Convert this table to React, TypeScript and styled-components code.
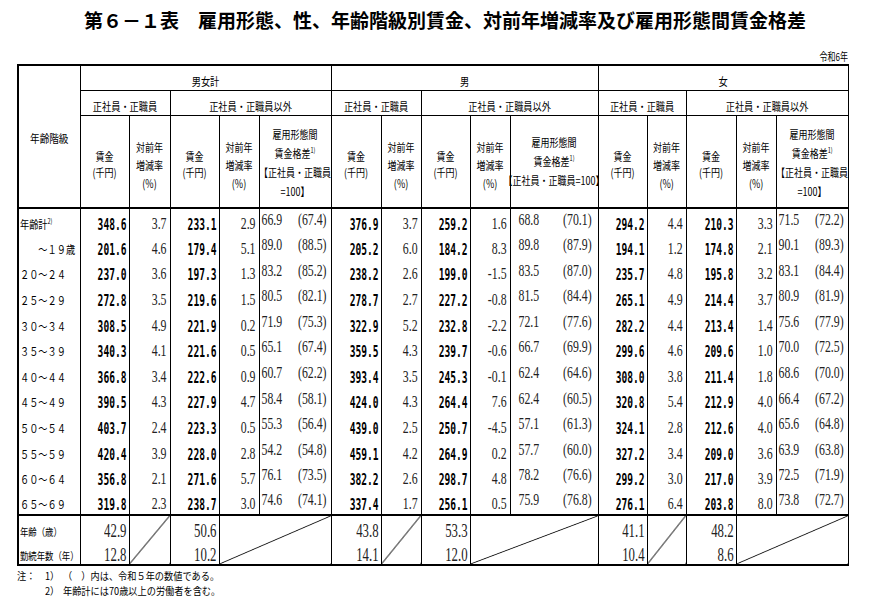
import React from "react";
import styled, { createGlobalStyle } from "styled-components";

const GlobalStyle = createGlobalStyle`
  html, body {
    margin: 0;
    padding: 0;
    background: #fff;
  }
  body {
    font-family: "Noto Sans CJK JP", "Noto Sans", sans-serif;
    color: #111;
  }
`;

const Page = styled.div`
  width: 870px;
  height: 604px;
  overflow: hidden;
`;

const Title = styled.h1`
  margin: 0;
  height: 40px;
  line-height: 40px;
  padding-left: 20px;
  text-align: center;
  font-family: "Noto Sans CJK JP", sans-serif;
  font-size: 19px;
  font-weight: 700;
  color: #000;
  white-space: nowrap;
`;

const Era = styled.div`
  width: 831px;
  margin-left: 17px;
  height: 24px;
  box-sizing: border-box;
  padding-bottom: 3px;
  display: flex;
  justify-content: flex-end;
  align-items: flex-end;
`;

// CJK text, drawn narrow and tall like the printed original
const Jp = styled.span<{ $size?: number; $sy?: number }>`
  display: inline-block;
  font-family: "Noto Sans CJK JP", sans-serif;
  font-size: ${(p) => p.$size ?? 9}px;
  line-height: 1;
  transform: scaleY(${(p) => p.$sy ?? 1.3});
  white-space: nowrap;
  color: #000;
`;

const Sup = styled.sup`
  font-size: 5.5px;
  line-height: 0;
  vertical-align: 4px;
`;

const Wage = styled.span`
  display: inline-block;
  font-family: "DejaVu Sans Mono", monospace;
  font-weight: 700;
  font-size: 9.6px;
  line-height: 1;
  transform: scaleY(1.7);
  color: #000;
  white-space: nowrap;
`;

const Rate = styled.span<{ $size?: number }>`
  display: inline-block;
  font-family: "Liberation Serif", serif;
  font-size: ${(p) => p.$size ?? 11.8}px;
  line-height: 1;
  transform: scaleY(1.48);
  color: #222;
  white-space: nowrap;
`;

const Table = styled.table`
  margin-left: 17px;
  width: 831px;
  border-collapse: collapse;
  table-layout: fixed;
  border-top: 2px solid #000;
  border-bottom: 2px solid #000;
  border-left: 2px solid #000;
  border-right: 1px solid #000;

  thead {
    border-bottom: 2px solid #000;
  }
  tfoot {
    border-top: 2px solid #000;
  }
`;

const HeadRow = styled.tr<{ $h: number }>`
  height: ${(p) => p.$h}px;
`;

const Th = styled.th`
  border: 1px solid #000;
  padding: 0;
  font-weight: normal;
  text-align: center;
  vertical-align: middle;
`;

const Stack = styled.div<{ $shift?: number }>`
  display: flex;
  flex-direction: column;
  align-items: center;
  margin-top: ${(p) => p.$shift ?? 0}px;
`;

const Line = styled.div<{ $h: number }>`
  height: ${(p) => p.$h}px;
  line-height: ${(p) => p.$h}px;
  white-space: nowrap;
`;

const DataRow = styled.tr`
  height: 25.6px;
`;

const FootRow = styled.tr`
  height: 24.5px;
`;

const LabelCell = styled.td`
  border-left: 1px solid #000;
  border-right: 1px solid #000;
  padding: 0 0 0 1px;
  text-align: left;
  vertical-align: middle;
  white-space: nowrap;
`;

const NumCell = styled.td<{ $pad: number }>`
  border-left: 1px solid #000;
  border-right: 1px solid #000;
  padding: 0 ${(p) => p.$pad}px 0 0;
  text-align: right;
  vertical-align: middle;
  white-space: nowrap;
`;

const GapBox = styled.div<{ $wide?: boolean }>`
  display: flex;
  justify-content: space-between;
  padding: ${(p) => (p.$wide ? "0 6px 0 8px" : "0 4px 0 2px")};
`;

const Diag = styled.td`
  border: 1px solid #000;
  padding: 0;
  background: linear-gradient(
    to bottom right,
    transparent calc(50% - 0.8px),
    #000 50%,
    transparent calc(50% + 0.8px)
  );
`;

const Notes = styled.div`
  margin-left: 17px;
  padding-top: 6px;
`;

const NoteRow = styled.div`
  display: grid;
  grid-template-columns: 28px 18px auto;
  height: 15px;
  line-height: 15px;
`;

const COLS = [62, 49, 41, 49, 40, 72, 50, 40, 49, 40, 88, 49, 39, 50, 40, 72];
const GROUPS = ["男女計", "男", "女"];

const ROWS: [React.ReactNode, string][] = [
  [<>年齢計<Sup>2)</Sup></>, "348.6 3.7 233.1 2.9 66.9 (67.4)|376.9 3.7 259.2 1.6 68.8 (70.1)|294.2 4.4 210.3 3.3 71.5 (72.2)"],
  ["　　～１９歳", "201.6 4.6 179.4 5.1 89.0 (88.5)|205.2 6.0 184.2 8.3 89.8 (87.9)|194.1 1.2 174.8 2.1 90.1 (89.3)"],
  ["２０～２４", "237.0 3.6 197.3 1.3 83.2 (85.2)|238.2 2.6 199.0 -1.5 83.5 (87.0)|235.7 4.8 195.8 3.2 83.1 (84.4)"],
  ["２５～２９", "272.8 3.5 219.6 1.5 80.5 (82.1)|278.7 2.7 227.2 -0.8 81.5 (84.4)|265.1 4.9 214.4 3.7 80.9 (81.9)"],
  ["３０～３４", "308.5 4.9 221.9 0.2 71.9 (75.3)|322.9 5.2 232.8 -2.2 72.1 (77.6)|282.2 4.4 213.4 1.4 75.6 (77.9)"],
  ["３５～３９", "340.3 4.1 221.6 0.5 65.1 (67.4)|359.5 4.3 239.7 -0.6 66.7 (69.9)|299.6 4.6 209.6 1.0 70.0 (72.5)"],
  ["４０～４４", "366.8 3.4 222.6 0.9 60.7 (62.2)|393.4 3.5 245.3 -0.1 62.4 (64.6)|308.0 3.8 211.4 1.8 68.6 (70.0)"],
  ["４５～４９", "390.5 4.3 227.9 4.7 58.4 (58.1)|424.0 4.3 264.4 7.6 62.4 (60.5)|320.8 5.4 212.9 4.0 66.4 (67.2)"],
  ["５０～５４", "403.7 2.4 223.3 0.5 55.3 (56.4)|439.0 2.5 250.7 -4.5 57.1 (61.3)|324.1 2.8 212.6 4.0 65.6 (64.8)"],
  ["５５～５９", "420.4 3.9 228.0 2.8 54.2 (54.8)|459.1 4.2 264.9 0.2 57.7 (60.0)|327.2 3.4 209.0 3.6 63.9 (63.8)"],
  ["６０～６４", "356.8 2.1 271.6 5.7 76.1 (73.5)|382.2 2.6 298.7 4.8 78.2 (76.6)|299.2 3.0 217.0 3.9 72.5 (71.9)"],
  ["６５～６９", "319.8 2.3 238.7 3.0 74.6 (74.1)|337.4 1.7 256.1 0.5 75.9 (76.8)|276.1 6.4 203.8 8.0 73.8 (72.7)"],
];

const FOOT = {
  age: [["42.9", "50.6"], ["43.8", "53.3"], ["41.1", "48.2"]],
  tenure: [["12.8", "10.2"], ["14.1", "12.0"], ["10.4", "8.6"]],
};

const HeadLines = ({ lines, h, shift }: { lines: React.ReactNode[]; h: number; shift?: number }) => (
  <Stack $shift={shift}>
    {lines.map((l, i) => (
      <Line key={i} $h={h}>
        <Jp $size={9} $sy={1.25}>{l}</Jp>
      </Line>
    ))}
  </Stack>
);

const App = () => {
  return (
    <Page>
      <GlobalStyle />
      <Title>第６－１表　雇用形態、性、年齢階級別賃金、対前年増減率及び雇用形態間賃金格差</Title>
      <Era>
        <Jp $size={8} $sy={1.35}>令和6年</Jp>
      </Era>
      <Table>
        <colgroup>
          {COLS.map((w, i) => (
            <col key={i} style={{ width: w }} />
          ))}
        </colgroup>
        <thead>
          <HeadRow $h={24}>
            <Th rowSpan={3}>
              <Jp $size={9.6} $sy={1.15}>年齢階級</Jp>
            </Th>
            {GROUPS.map((g) => (
              <Th key={g} colSpan={5}>
                <Jp $size={9.2} $sy={1.25}>{g}</Jp>
              </Th>
            ))}
          </HeadRow>
          <HeadRow $h={25}>
            {GROUPS.map((g) => (
              <React.Fragment key={g}>
                <Th colSpan={2}>
                  <Jp $size={9.2} $sy={1.2}>正社員・正職員</Jp>
                </Th>
                <Th colSpan={3}>
                  <Jp $size={9.2} $sy={1.2}>正社員・正職員以外</Jp>
                </Th>
              </React.Fragment>
            ))}
          </HeadRow>
          <HeadRow $h={92}>
            {GROUPS.map((g, gi) => (
              <React.Fragment key={g}>
                <Th>
                  <HeadLines lines={["賃金", "(千円)"]} h={16} />
                </Th>
                <Th>
                  <HeadLines lines={["対前年", "増減率", "(%)"]} h={18} shift={2} />
                </Th>
                <Th>
                  <HeadLines lines={["賃金", "(千円)"]} h={16} />
                </Th>
                <Th>
                  <HeadLines lines={["対前年", "増減率", "(%)"]} h={18} shift={2} />
                </Th>
                <Th>
                  {gi === 1 ? (
                    <HeadLines
                      lines={["雇用形態間", <>賃金格差<Sup>1)</Sup></>, "【正社員・正職員=100】"]}
                      h={19}
                      shift={-6}
                    />
                  ) : (
                    <HeadLines
                      lines={["雇用形態間", <>賃金格差<Sup>1)</Sup></>, "【正社員・正職員", "=100】"]}
                      h={19}
                      shift={-3}
                    />
                  )}
                </Th>
              </React.Fragment>
            ))}
          </HeadRow>
        </thead>
        <tbody>
          {ROWS.map(([label, data], ri) => (
            <DataRow key={ri}>
              <LabelCell>
                <Jp $size={9.2} $sy={1.25}>{label}</Jp>
              </LabelCell>
              {data.split("|").map((grp, gi) => {
                const v = grp.split(" ");
                return (
                  <React.Fragment key={gi}>
                    <NumCell $pad={2}><Wage>{v[0]}</Wage></NumCell>
                    <NumCell $pad={3}><Rate>{v[1]}</Rate></NumCell>
                    <NumCell $pad={2}><Wage>{v[2]}</Wage></NumCell>
                    <NumCell $pad={3}><Rate>{v[3]}</Rate></NumCell>
                    <NumCell $pad={0}>
                      <GapBox $wide={gi === 1}>
                        <Rate>{v[4]}</Rate>
                        <Rate>{v[5]}</Rate>
                      </GapBox>
                    </NumCell>
                  </React.Fragment>
                );
              })}
            </DataRow>
          ))}
        </tbody>
        <tfoot>
          <FootRow>
            <LabelCell>
              <Jp $size={8.4} $sy={1.25}>年齢（歳）</Jp>
            </LabelCell>
            {FOOT.age.map((f, gi) => (
              <React.Fragment key={gi}>
                <NumCell $pad={2}><Rate $size={12.8}>{f[0]}</Rate></NumCell>
                <Diag rowSpan={2} />
                <NumCell $pad={2}><Rate $size={12.8}>{f[1]}</Rate></NumCell>
                <Diag rowSpan={2} colSpan={2} />
              </React.Fragment>
            ))}
          </FootRow>
          <FootRow>
            <LabelCell>
              <Jp $size={8.4} $sy={1.25}>勤続年数（年）</Jp>
            </LabelCell>
            {FOOT.tenure.map((f, gi) => (
              <React.Fragment key={gi}>
                <NumCell $pad={2}><Rate $size={12.8}>{f[0]}</Rate></NumCell>
                <NumCell $pad={2}><Rate $size={12.8}>{f[1]}</Rate></NumCell>
              </React.Fragment>
            ))}
          </FootRow>
        </tfoot>
      </Table>
      <Notes>
        <NoteRow>
          <Jp $size={9.2} $sy={1.1}>注：</Jp>
          <Jp $size={9.2} $sy={1.1}>1）</Jp>
          <Jp $size={9.2} $sy={1.1}>（　）内は、令和５年の数値である。</Jp>
        </NoteRow>
        <NoteRow>
          <span />
          <Jp $size={9.2} $sy={1.1}>2）</Jp>
          <Jp $size={9.2} $sy={1.1}>年齢計には70歳以上の労働者を含む。</Jp>
        </NoteRow>
      </Notes>
    </Page>
  );
};

export default App;
